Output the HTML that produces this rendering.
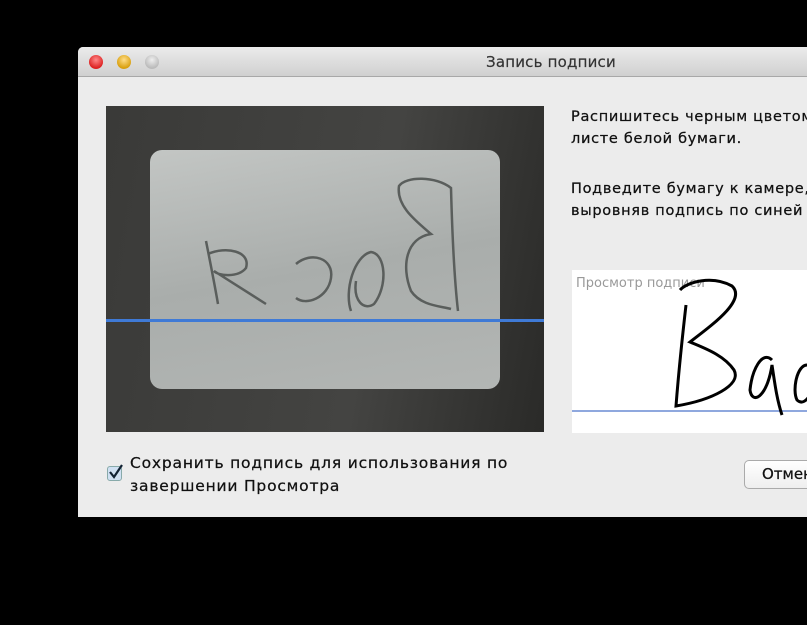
<!DOCTYPE html>
<html><head><meta charset="utf-8"><style>
*{margin:0;padding:0;box-sizing:border-box}
body{width:807px;height:625px;background:#000;position:relative;overflow:hidden;font-family:"DejaVu Sans","Liberation Sans",sans-serif}
.win{position:absolute;left:78px;top:47px;width:760px;height:470px;background:#ececec;border-radius:5px 5px 0 0;overflow:hidden}
.title{height:30px;background:linear-gradient(#ebebeb,#d0d0d0);border-bottom:1px solid #a8a8a8}
.tt{position:absolute;left:408px;top:6px;font-size:15px;color:#333;letter-spacing:0.2px;-webkit-text-stroke:0.2px #333}
.b{position:absolute;top:8px;width:14px;height:14px;border-radius:50%}
.cam{position:absolute;left:28px;top:59px;width:438px;height:326px;background:linear-gradient(100deg,#3a3a38,#444442 60%,#2a2a28);overflow:hidden}
.card{position:absolute;left:44px;top:44px;width:350px;height:239px;background:linear-gradient(170deg,#c3c6c4,#a9adab 50%,#b3b6b4);border-radius:12px}
.line{position:absolute;left:0;top:213px;width:438px;height:3px;background:#3f7ad6}
.txt{position:absolute;left:493px;font-size:14.5px;color:#111;line-height:22px;white-space:nowrap;letter-spacing:0.7px;-webkit-text-stroke:0.25px #111}
.prev{position:absolute;left:494px;top:223px;width:300px;height:163px;background:#fff}
.pl{position:absolute;left:4px;top:6px;font-size:13px;color:#999}
.btn{position:absolute;left:666px;top:413px;width:120px;height:29px;border:1px solid #aaa;border-radius:5px;background:linear-gradient(#fff,#eee);font-size:15px;line-height:27px;padding-left:17px;color:#111;-webkit-text-stroke:0.25px #111}
.chk{position:absolute;left:29px;top:419px;width:15px;height:15px;border:1px solid #8aa;border-radius:3px;background:#cfe0f2}
.cl{position:absolute;left:52px;top:405px;font-size:15.5px;line-height:23px;color:#111;letter-spacing:0.8px;white-space:nowrap;-webkit-text-stroke:0.25px #111}
</style></head><body>
<div class="win">
<div class="title"></div>
<div class="tt">Запись подписи</div>
<div class="b" style="left:11px;background:radial-gradient(circle at 50% 35%,#f88,#d22 70%)"></div>
<div class="b" style="left:39px;background:radial-gradient(circle at 50% 35%,#fd8,#d9a010 70%)"></div>
<div class="b" style="left:67px;background:radial-gradient(circle at 50% 35%,#eee,#bbb 70%)"></div>
<div class="cam"><div class="card"></div>
<svg style="position:absolute;left:0;top:0" width="438" height="326" fill="none" stroke="#5a5e5c" stroke-width="2.5">
<path d="M352 205 C348 170 346 120 345 82 C330 70 300 70 293 80 C290 100 310 115 325 128 C300 132 295 160 305 185 C315 200 335 200 345 203"/>
<path d="M245 205 C238 185 248 150 265 146 C280 148 282 180 268 198 C258 205 247 195 250 175"/>
<path d="M190 158 C205 145 228 152 225 172 C222 192 200 200 190 192"/>
<path d="M100 135 C104 155 108 175 112 198 M102 148 C120 140 145 145 140 162 C132 172 112 170 108 165 L160 198"/>
</svg>
<div class="line"></div></div>
<div class="txt" style="top:59px">Распишитесь черным цветом на<br>листе белой бумаги.</div>
<div class="txt" style="top:131px">Подведите бумагу к камере,<br>выровняв подпись по синей линии.</div>
<div class="prev"><div class="pl">Просмотр подписи</div>
<div style="position:absolute;left:0;top:140px;width:300px;height:2px;background:#8fa8de"></div>
<svg style="position:absolute;left:0;top:0" width="300" height="163" fill="none" stroke="#000" stroke-width="3">
<path d="M114 35 C110 70 106 110 104 136 C140 130 170 115 162 100 C152 85 132 78 118 72 C140 55 175 30 160 16 C140 5 115 12 108 20"/>
<path d="M200 90 C190 80 180 100 178 120 C180 135 195 128 200 95 C203 115 205 130 210 145"/>
<path d="M235 95 C225 95 220 120 225 130 C230 135 235 130 238 125"/>
</svg></div>
<div class="chk"><svg width="15" height="15" style="position:absolute;left:0;top:-3px"><path d="M2 8 L6 13 L14 1" stroke="#123" stroke-width="2.2" fill="none"/></svg></div>
<div class="cl">Сохранить подпись для использования по<br>завершении Просмотра</div>
<div class="btn">Отменить</div>
</div>
</body></html>
